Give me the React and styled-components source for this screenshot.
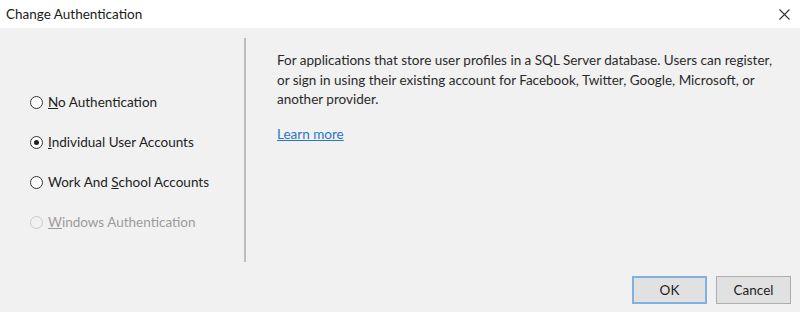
import React from "react";
import styled, { createGlobalStyle } from "styled-components";

const GlobalStyle = createGlobalStyle`
  html, body {
    margin: 0;
    padding: 0;
    background: #f1f1f1;
  }
  body {
    font-family: Lato, "Noto Sans", "Liberation Sans", sans-serif;
    font-size: 13.5px;
    color: #1e1e1e;
  }
`;

const Window = styled.div`
  width: 800px;
  height: 312px;
  display: flex;
  flex-direction: column;
  background: #f1f1f1;
  overflow: hidden;
`;

const TitleBar = styled.div`
  height: 28px;
  flex: none;
  background: #ffffff;
  display: flex;
  align-items: center;
  justify-content: space-between;
  padding: 0 10px 0 6px;
  font-size: 13.5px;
  color: #1a1a1a;
`;

const CloseButton = styled.div`
  width: 12px;
  height: 12px;
  display: flex;
  align-items: center;
  justify-content: center;
`;

const Body = styled.div`
  flex: none;
  height: 224px;
  margin-top: 10px;
  display: flex;
`;

const LeftPane = styled.div`
  width: 244px;
  flex: none;
  box-sizing: border-box;
  padding: 56px 0 0 30px;
  display: flex;
  flex-direction: column;
  gap: 24px;
`;

const Divider = styled.div`
  width: 2px;
  flex: none;
  background: #bcbcbc;
`;

const RightPane = styled.div`
  flex: 1;
  padding: 13px 20px 0 31px;
`;

const Description = styled.p`
  margin: 0;
  line-height: 19.5px;
  color: #2a2a2a;
`;

const LearnMore = styled.a`
  display: inline-block;
  margin-top: 16px;
  color: #2a75c9;
  text-decoration: underline;
  cursor: pointer;
`;

const OptionRow = styled.label`
  display: flex;
  align-items: center;
  height: 16px;
  gap: 5px;
  color: ${(p) => (p.disabled ? "#9c9c9c" : "#1e1e1e")};
`;

const RadioCircle = styled.span`
  width: 13px;
  height: 13px;
  box-sizing: border-box;
  border-radius: 50%;
  border: 1px solid ${(p) => (p.disabled ? "#c8c8c8" : "#333333")};
  background: ${(p) => (p.disabled ? "#f1f1f1" : "#ffffff")};
  display: flex;
  align-items: center;
  justify-content: center;
  flex: none;

  &::after {
    content: "";
    width: 5px;
    height: 5px;
    border-radius: 50%;
    background: #1e1e1e;
    display: ${(p) => (p.checked ? "block" : "none")};
  }
`;

const Key = styled.span`
  text-decoration: underline;
`;

const Footer = styled.div`
  flex: 1;
  display: flex;
  justify-content: flex-end;
  align-items: flex-start;
  gap: 9px;
  padding: 14px 9px 0 0;
`;

const Button = styled.button`
  width: 75px;
  height: 28px;
  box-sizing: border-box;
  background: #e1e1e1;
  border: ${(p) => (p.primary ? "2px solid #7fb2e3" : "1px solid #adadad")};
  font-family: inherit;
  font-size: 13.5px;
  color: #1e1e1e;
  padding: 0;
`;

const options = [
  { pre: "", key: "N", post: "o Authentication" },
  { pre: "", key: "I", post: "ndividual User Accounts", checked: true },
  { pre: "Work And ", key: "S", post: "chool Accounts" },
  { pre: "", key: "W", post: "indows Authentication", disabled: true },
];

const App = () => {
  return (
    <>
      <GlobalStyle />
      <Window>
        <TitleBar>
          <span>Change Authentication</span>
          <CloseButton>
            <svg width="11" height="11" viewBox="0 0 11 11">
              <path d="M0.5 0.5 L10.5 10.5 M10.5 0.5 L0.5 10.5" stroke="#333" strokeWidth="1.1" />
            </svg>
          </CloseButton>
        </TitleBar>
        <Body>
          <LeftPane>
            {options.map((o) => (
              <OptionRow key={o.key} disabled={o.disabled}>
                <RadioCircle checked={o.checked} disabled={o.disabled} />
                <span>
                  {o.pre}
                  <Key>{o.key}</Key>
                  {o.post}
                </span>
              </OptionRow>
            ))}
          </LeftPane>
          <Divider />
          <RightPane>
            <Description>
              For applications that store user profiles in a SQL Server database. Users can register,
              <br />
              or sign in using their existing account for Facebook, Twitter, Google, Microsoft, or
              <br />
              another provider.
            </Description>
            <LearnMore>Learn more</LearnMore>
          </RightPane>
        </Body>
        <Footer>
          <Button primary>OK</Button>
          <Button>Cancel</Button>
        </Footer>
      </Window>
    </>
  );
};

export default App;
